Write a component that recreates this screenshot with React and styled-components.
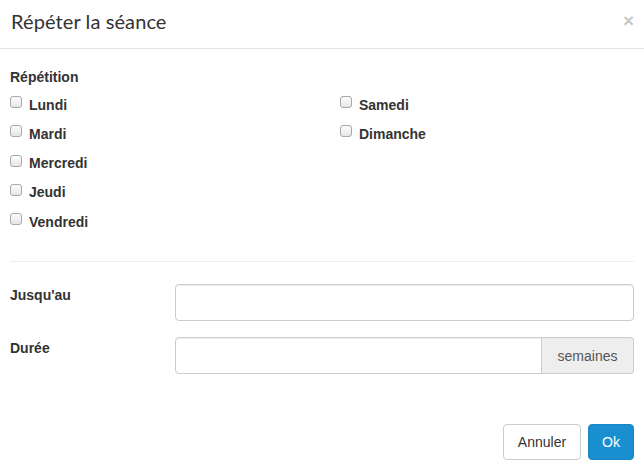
import React from "react";
import styled, { createGlobalStyle } from "styled-components";

const Global = createGlobalStyle`
  html, body { margin: 0; padding: 0; background: #fff; }
  body { font-family: "Liberation Sans", Arial, sans-serif; font-size: 14px; color: #333; }
  * { box-sizing: border-box; }
`;

const Modal = styled.div`
  width: 644px;
  height: 470px;
  background: #fff;
  display: flex;
  flex-direction: column;
`;

const Header = styled.div`
  height: 49px;
  padding: 0 10px 0 11px;
  border-bottom: 1px solid #e5e5e5;
  display: flex;
  align-items: center;
  justify-content: space-between;
`;

const Title = styled.h4`
  margin: 0;
  font-family: "Lato", "Open Sans", sans-serif;
  font-weight: 400;
  font-size: 20px;
  color: #333;
  letter-spacing: 0.1px;
  padding-bottom: 6px;
`;

const Close = styled.span`
  font-size: 19px;
  font-weight: 700;
  color: #c8c8c8;
  line-height: 1;
  padding-bottom: 8px;
`;

const Body = styled.div`
  padding: 20px 10px 0 10px;
  flex: 1;
`;

const SectionLabel = styled.div`
  font-weight: 700;
  font-size: 14px;
  margin-bottom: 5px;
`;

const Days = styled.div`
  display: grid;
  grid-template-columns: 330px 1fr;
`;

const Column = styled.div`
  display: flex;
  flex-direction: column;
`;

const Check = styled.label`
  display: flex;
  align-items: center;
  height: 29.25px;
  font-weight: 700;
  font-size: 14px;
`;

const Box = styled.span`
  width: 12px;
  height: 12px;
  border: 1px solid #a8a8a8;
  border-radius: 3px;
  background: linear-gradient(#fdfdfd, #e6e6e6);
  margin-right: 7px;
  margin-top: -5px;
`;

const Rule = styled.hr`
  border: 0;
  border-top: 1px solid #eee;
  margin: 25px 0 22px;
`;

const FormRow = styled.div`
  display: flex;
  align-items: flex-start;
  margin-bottom: 16px;
`;

const FieldLabel = styled.div`
  width: 165px;
  font-weight: 700;
  font-size: 14px;
  padding-top: 3px;
`;

const Group = styled.div`
  flex: 1;
  display: flex;
  height: 37px;
`;

const Input = styled.div`
  flex: 1;
  height: 37px;
  border: 1px solid #ccc;
  border-radius: ${(p) => (p.$addon ? "4px 0 0 4px" : "4px")};
  box-shadow: inset 0 1px 1px rgba(0, 0, 0, 0.075);
`;

const Addon = styled.div`
  width: 92px;
  border: 1px solid #ccc;
  border-left: 0;
  border-radius: 0 4px 4px 0;
  background: #eee;
  color: #555;
  font-size: 14px;
  display: flex;
  align-items: center;
  justify-content: center;
  padding-top: 1px;
`;

const Footer = styled.div`
  display: flex;
  justify-content: flex-end;
  gap: 7px;
  padding: 0 10px 10px;
`;

const Button = styled.button`
  height: 36px;
  padding: 0 ${(p) => (p.$primary ? "13px" : "14px")};
  font-family: "Liberation Sans", Arial, sans-serif;
  font-size: 14px;
  border-radius: 4px;
  border: 1px solid ${(p) => (p.$primary ? "#1a86c4" : "#ccc")};
  background: ${(p) => (p.$primary ? "#1a8fcf" : "#fff")};
  color: ${(p) => (p.$primary ? "#fff" : "#333")};
`;

const left = ["Lundi", "Mardi", "Mercredi", "Jeudi", "Vendredi"];
const right = ["Samedi", "Dimanche"];

export default function App() {
  return (
    <Modal>
      <Global />
      <Header>
        <Title>Répéter la séance</Title>
        <Close>×</Close>
      </Header>
      <Body>
        <SectionLabel>Répétition</SectionLabel>
        <Days>
          <Column>
            {left.map((d) => (
              <Check key={d}>
                <Box />
                {d}
              </Check>
            ))}
          </Column>
          <Column>
            {right.map((d) => (
              <Check key={d}>
                <Box />
                {d}
              </Check>
            ))}
          </Column>
        </Days>
        <Rule />
        <FormRow>
          <FieldLabel>Jusqu'au</FieldLabel>
          <Group>
            <Input />
          </Group>
        </FormRow>
        <FormRow>
          <FieldLabel>Durée</FieldLabel>
          <Group>
            <Input $addon />
            <Addon>semaines</Addon>
          </Group>
        </FormRow>
      </Body>
      <Footer>
        <Button>Annuler</Button>
        <Button $primary>Ok</Button>
      </Footer>
    </Modal>
  );
}
